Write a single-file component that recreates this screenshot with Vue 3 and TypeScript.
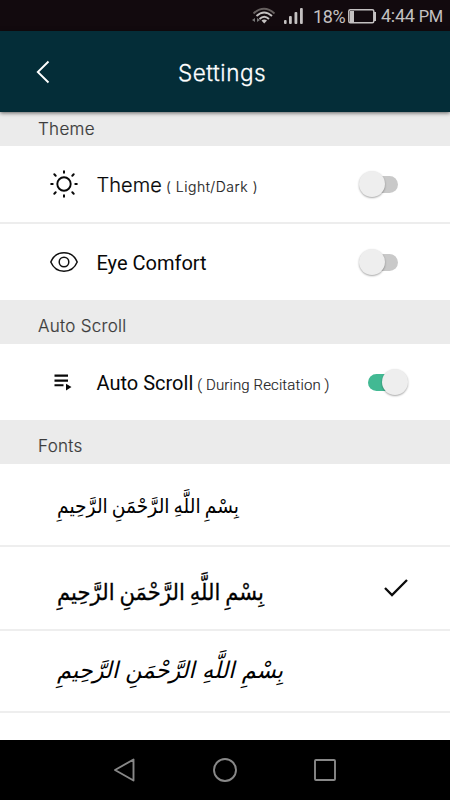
<script setup lang="ts">
import { ref } from 'vue'

const lightDark = ref(false)
const eyeComfort = ref(false)
const autoScroll = ref(true)
const selectedFont = ref(1)

const phrase = 'بِسْمِ اللَّهِ الرَّحْمَنِ الرَّحِيمِ'
const fonts = [
  { name: 'thin', width: 182, baseline: 38 },
  { name: 'bold', width: 207, baseline: 42 },
  { name: 'slanted', width: 226, baseline: 37 },
]
</script>

<template>
  <div class="screen">
    <div class="status">
      <svg class="wifi" width="24" height="18" viewBox="0 0 24 18" fill="none" stroke-width="1.9">
        <path d="M1.5 6.5Q12-3 22.5 6.500" stroke="#66605f" />
        <path d="M4.500 9Q12 1.800 20 9M7.500 12Q12.200 7.500 17 12" stroke="#c4c1c1" />
        <path d="M9.500 13.500Q12.200 11.500 15 13.500L12.200 16.500Z" fill="#c4c1c1" />
        <path d="M0 13l3-2v4zM5 11l3 2-3 2z" fill="#777" />
      </svg>
      <svg class="signal" width="19" height="16" viewBox="0 0 19 16" fill="#c4c1c1">
        <rect x="0" y="12" width="2.600" height="4" rx="1" /><rect x="5" y="8" width="2.800" height="8" rx="1" />
        <rect x="10.500" y="4" width="2.800" height="12" rx="1" /><rect x="16" y="0" width="2.800" height="16" rx="1" />
      </svg>
      <span class="percent">18%</span>
      <svg class="battery" width="29" height="15" viewBox="0 0 29 15">
        <rect x=".8" y=".8" width="25" height="13" rx="1.500" fill="none" stroke="#c4c1c1" stroke-width="1.500" />
        <rect x="2" y="2" width="4" height="11" fill="#c4c1c1" /><rect x="26" y="3" width="2" height="9" fill="#c4c1c1" />
      </svg>
      <span class="clock">4:44 <small>PM</small></span>
    </div>

    <header class="header">
      <svg class="back" width="14" height="24" viewBox="0 0 14 24" fill="none" stroke="#fff" stroke-width="1.900">
        <path d="M12.500 1.500L1.800 12 12.500 22.500" />
      </svg>
      <h1>Settings</h1>
    </header>

    <main>
      <h2 class="section first">Theme</h2>
      <div class="row divided">
        <svg class="icon" width="28" height="28" viewBox="0 0 28 28" fill="none" stroke="#080808" stroke-width="1.900" stroke-linecap="round">
          <circle cx="14" cy="14" r="6.700" />
          <path d="M14 1.200v1.500M14 25.300v1.500M1.200 14h1.500M25.300 14h1.500M4.300 4.300l1.400 1.400M22.300 22.300l1.400 1.400M4.300 23.700l1.400-1.400M22.300 5.700l1.400-1.400" stroke-width="2" />
        </svg>
        <span class="label wide">Theme</span><span class="hint wide-hint">( Light/Dark )</span>
        <button class="switch" :class="{ on: lightDark }" aria-label="Theme" @click="lightDark = !lightDark"><i /></button>
      </div>
      <div class="row">
        <svg class="icon" width="28" height="28" viewBox="0 0 28 28" fill="none" stroke="#111" stroke-width="1.500">
          <path d="M.8 14C6 1.700 22 1.700 27.200 14C22 26.300 6 26.300 .8 14Z" />
          <circle cx="14" cy="14" r="4.800" />
        </svg>
        <span class="label">Eye Comfort</span>
        <button class="switch" :class="{ on: eyeComfort }" aria-label="Eye Comfort" @click="eyeComfort = !eyeComfort"><i /></button>
      </div>

      <h2 class="section">Auto Scroll</h2>
      <div class="row">
        <svg class="icon" width="28" height="28" viewBox="0 0 28 28" fill="#080808">
          <path d="M4.500 6.500h13.500v2.300H4.500zM4.500 11.500h13.500v2.300H4.500zM4.500 16.300h9v2h-9zM16 15.800l5.500 3.300-5.500 3.300z" />
        </svg>
        <span class="label">Auto Scroll</span><span class="hint">( During Recitation )</span>
        <button class="switch" :class="{ on: autoScroll }" aria-label="Auto Scroll" @click="autoScroll = !autoScroll"><i /></button>
      </div>

      <h2 class="section">Fonts</h2>
      <div v-for="(font, i) in fonts" :key="font.name" class="font-row" :class="font.name" @click="selectedFont = i">
        <svg class="sample" :width="font.width" height="60" :viewBox="`0 0 ${font.width} 60`">
          <text :x="font.width" :y="font.baseline" direction="rtl" :textLength="font.width" lengthAdjust="spacingAndGlyphs">{{ phrase }}</text>
        </svg>
        <svg v-if="selectedFont === i" class="check" width="26" height="20" viewBox="0 0 26 20" fill="none" stroke="#0c0c0c" stroke-width="2.300">
          <path d="M2 10L9 17 24 2" />
        </svg>
      </div>
    </main>

    <nav class="nav">
      <svg width="24" height="26" viewBox="0 0 24 26"><path d="M2 13L20.500 2.500V23.500Z" /></svg>
      <svg width="24" height="26" viewBox="0 0 24 26"><circle cx="12" cy="13" r="11" /></svg>
      <svg width="24" height="26" viewBox="0 0 24 26"><rect x="2" y="3" width="20" height="20" rx="1" /></svg>
    </nav>
  </div>
</template>

<style>
body { background: #fff; }
</style>

<style scoped>
* { box-sizing: border-box; }
.screen { width: 450px; height: 800px; display: flex; flex-direction: column; overflow: hidden; background: #fff; font-family: Roboto, sans-serif; color: #080808; }
.status { height: 31px; flex: none; background: #120a0e; display: flex; align-items: center; padding: 2px 0 0 252px; color: #c4c1c1; font-size: 18px; line-height: 28px; white-space: nowrap; }
.wifi { margin-top: -2px; }
.signal { margin: -2px 0 0 8px; }
.percent { margin-left: 10px; width: 34px; font-size: 18px; letter-spacing: -.4px; }
.battery { margin: -1px 0 0 1px; flex: none; }
.clock { margin-left: 4px; font-size: 18px; letter-spacing: -.3px; }
.clock small { font-size: 16.500px; }
.header { height: 81px; flex: none; background: #042d38; display: flex; align-items: center; padding-left: 36px; position: relative; z-index: 1; box-shadow: 0 1px 4px rgba(0, 0, 0, .6); color: #fff; }
.header h1 { margin: 2px 0 0 128px; font: 300 22.500px/30px Inter, sans-serif; letter-spacing: .55px; -webkit-text-stroke: .3px #fff; }
main { flex: 1; display: flex; flex-direction: column; }
.section { height: 44px; flex: none; margin: 0; padding: 7px 0 0 38px; background: #ebebeb; color: #3c3c3c; font: 300 17px/38px Inter, sans-serif; letter-spacing: .3px; -webkit-text-stroke: .2px #3c3c3c; }
.section.first { height: 34px; padding-top: 0; line-height: 34px; }
.row { height: 76px; flex: none; display: flex; align-items: center; padding: 0 42px 0 50px; }
.row.divided { height: 78px; border-bottom: 2px solid #ededed; }
.icon { flex: none; margin-right: 18.500px; }
.label { font-size: 20px; line-height: 30px; margin-top: 2px; white-space: nowrap; }
.wide { font-family: Inter, sans-serif; font-weight: 300; letter-spacing: .05px; -webkit-text-stroke: .2px #080808; }
.hint { font-size: 15px; line-height: 20px; margin: 5px 0 0 4px; color: #222; white-space: nowrap; font-weight: 300; letter-spacing: .12px; -webkit-text-stroke: .15px #222; }
.wide-hint { font-family: Inter, sans-serif; font-size: 14px; letter-spacing: .52px; }
.switch { width: 50px; height: 30px; border: 0; padding: 0; margin-left: auto; background: none; display: flex; align-items: center; }
.switch::before { content: ''; width: 31px; height: 17px; border-radius: 9px; background: #c9c9c9; margin-left: 9px; order: 1; }
.switch i { width: 26px; height: 26px; border-radius: 50%; background: #eee; box-shadow: 0 1px 2px rgba(0, 0, 0, .35); flex: none; order: 2; margin-left: -39.500px; z-index: 1; }
.switch.on::before { background: #42b993; margin-left: 10px; }
.switch.on i { margin-left: -16.500px; }
.font-row { height: 83px; flex: none; display: flex; align-items: center; border-bottom: 2px solid #eee; padding: 0 41px 0 57px; }
.font-row.bold { height: 84px; }
.font-row.slanted { height: 82px; }
.sample { overflow: visible; font-family: "DejaVu Sans", sans-serif; font-size: 20px; word-spacing: -2px; }
.bold .sample { font-size: 23px; }
.bold .sample text { stroke: #080808; stroke-width: .3px; }
.slanted .sample { font-size: 23px; font-style: oblique; word-spacing: 0; }
.check { margin-left: auto; }
.nav { height: 60px; flex: none; background: #000; display: flex; align-items: center; justify-content: center; gap: 76px; }
.nav svg { fill: none; stroke: #888; stroke-width: 1.900; stroke-linejoin: round; }
</style>
